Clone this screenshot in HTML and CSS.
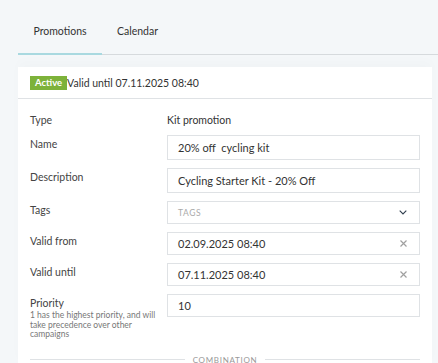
FILE: index.html
```html
<!DOCTYPE html>
<html lang="en">
<head>
<meta charset="UTF-8">
<meta name="viewport" content="width=device-width, initial-scale=1.0">
<title>Promotion</title>
<link rel="stylesheet" href="styles.css">
</head>
<body>
<div class="page">
    <div class="tabs">
        <div class="tab active">Promotions</div>
        <div class="tab">Calendar</div>
    </div>

    <div class="card">
        <div class="card-header">
            <span class="badge">Active</span>Valid until 07.11.2025 08:40
        </div>
        <div class="card-body">
            <div class="form">
                <div class="label first">Type</div>
                <div class="value">Kit promotion</div>

                <div class="label">Name</div>
                <div class="field tall">20% off&nbsp; cycling kit</div>

                <div class="label">Description</div>
                <div class="field tall">Cycling Starter Kit - 20% Off</div>

                <div class="label">Tags</div>
                <div class="field">
                    <span class="placeholder">TAGS</span>
                    <svg class="chevron" width="8" height="5" viewBox="0 0 8 5"><path d="M0.7 0.7l3.3 3.3 3.3-3.3" fill="none" stroke="#2f3e4e" stroke-width="1.1"/></svg>
                </div>

                <div class="label">Valid from</div>
                <div class="field">
                    <span>02.09.2025 08:40</span>
                    <svg class="clear" width="7" height="7" viewBox="0 0 7 7"><path d="M0.5 0.5l6 6M6.5 0.5l-6 6" stroke="#a0a0a0" stroke-width="1.2"/></svg>
                </div>

                <div class="label">Valid until</div>
                <div class="field">
                    <span>07.11.2025 08:40</span>
                    <svg class="clear" width="7" height="7" viewBox="0 0 7 7"><path d="M0.5 0.5l6 6M6.5 0.5l-6 6" stroke="#a0a0a0" stroke-width="1.2"/></svg>
                </div>

                <div class="label">
                    Priority
                    <div class="hint">1 has the highest priority, and will take precedence over other campaigns</div>
                </div>
                <div class="field">10</div>
            </div>

            <div class="divider"><span>COMBINATION</span></div>
        </div>
    </div>
</div>
</body>
</html>
```

FILE: styles.css
```css
body {
    font-family: Lato, "Noto Sans", sans-serif;
    margin: 0;
    background: #f4f7f9;
    color: #333;
    font-size: 10.5px;
}

.page {
    padding: 0 0 0 18px;
}

.tabs {
    display: flex;
    border-bottom: 1px solid #d6dadd;
    height: 54px;
}

.tab {
    padding: 25px 15px 0;
    line-height: 13px;
    color: #333;
}

.tab.active {
    border-bottom: 2px solid #a9d9e0;
    margin-bottom: -1px;
    width: 54px;
    text-align: center;
}

.card {
    margin-top: 12px;
    width: 414px;
    background: #fff;
    box-shadow: 0 -6px 10px rgba(0, 0, 0, 0.015);
}

.card-header {
    height: 31px;
    padding: 0 12px;
    display: flex;
    align-items: center;
    border-bottom: 1px solid #dfe2e5;
    color: #333;
}

.badge {
    background: #7db23a;
    color: #fff;
    font-size: 9.5px;
    font-weight: bold;
    padding: 0 5px;
    height: 14px;
    line-height: 14px;
    margin-top: 1px;
}

.card-body {
    padding: 12px 12px 0;
}

.form {
    display: grid;
    grid-template-columns: 137px 1fr;
    row-gap: 8px;
    align-items: start;
}

.label {
    padding-top: 3px;
    line-height: 13px;
    color: #444;
}

.label.first,
.value {
    padding-top: 2px;
    line-height: 14px;
}

.field {
    height: 23px;
    border: 1px solid #dfe2e5;
    box-sizing: border-box;
    padding: 0 10px;
    display: flex;
    align-items: center;
    justify-content: space-between;
    font-size: 11px;
    color: #333;
}

.field.tall {
    height: 25px;
}

.placeholder {
    color: #aaa;
    font-size: 8.5px;
    letter-spacing: 0.6px;
}

.chevron,
.clear {
    margin-right: 2px;
}

.hint {
    font-size: 8.5px;
    color: #777;
    width: 130px;
    line-height: 9.5px;
    margin-top: 1px;
}

.divider {
    margin-top: 15px;
    display: flex;
    align-items: center;
    gap: 8px;
    color: #999;
    font-size: 8px;
    letter-spacing: 0.7px;
    line-height: 10px;
}

.divider::before,
.divider::after {
    content: "";
    flex: 1;
    border-top: 1px solid #dfe2e5;
}
```
